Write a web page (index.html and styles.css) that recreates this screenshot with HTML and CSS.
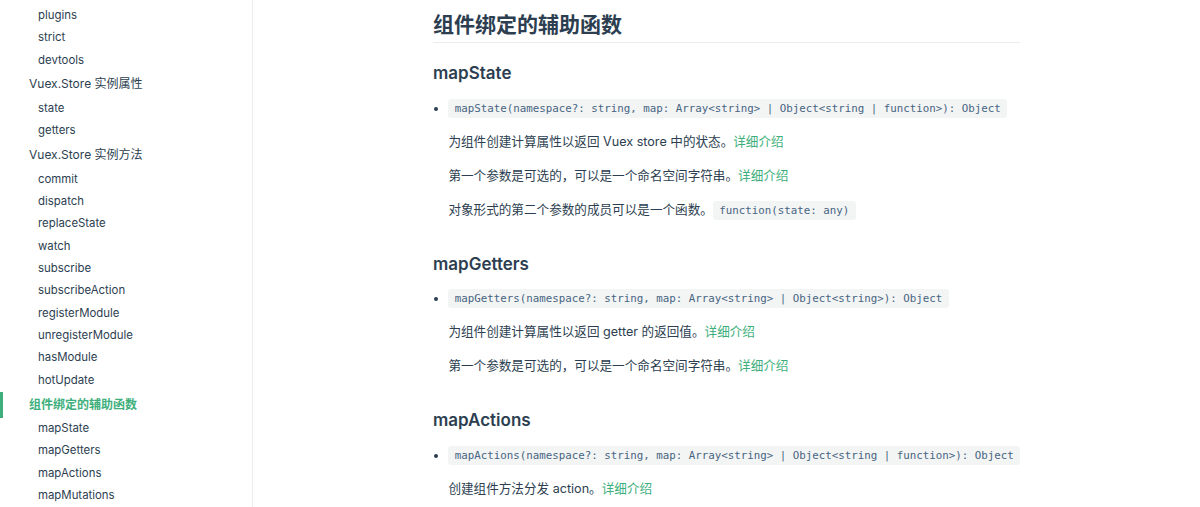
FILE: index.html
```html
<!DOCTYPE html>
<html lang="zh-CN">
<head>
    <meta charset="UTF-8">
    <meta name="viewport" content="width=device-width, initial-scale=1.0">
    <title>API 参考 | Vuex</title>
    <link rel="stylesheet" href="styles.css">
</head>
<body>
    <aside class="sidebar">
        <ul class="sidebar-links">
            <li><a class="sub-link" href="#plugins">plugins</a></li>
            <li><a class="sub-link" href="#strict">strict</a></li>
            <li><a class="sub-link" href="#devtools">devtools</a></li>
            <li><a class="group-link" href="#vuex-store-实例属性">Vuex.Store 实例属性</a></li>
            <li><a class="sub-link" href="#state">state</a></li>
            <li><a class="sub-link" href="#getters">getters</a></li>
            <li><a class="group-link" href="#vuex-store-实例方法">Vuex.Store 实例方法</a></li>
            <li><a class="sub-link" href="#commit">commit</a></li>
            <li><a class="sub-link" href="#dispatch">dispatch</a></li>
            <li><a class="sub-link" href="#replacestate">replaceState</a></li>
            <li><a class="sub-link" href="#watch">watch</a></li>
            <li><a class="sub-link" href="#subscribe">subscribe</a></li>
            <li><a class="sub-link" href="#subscribeaction">subscribeAction</a></li>
            <li><a class="sub-link" href="#registermodule">registerModule</a></li>
            <li><a class="sub-link" href="#unregistermodule">unregisterModule</a></li>
            <li><a class="sub-link" href="#hasmodule">hasModule</a></li>
            <li><a class="sub-link" href="#hotupdate">hotUpdate</a></li>
            <li><a class="group-link active" href="#组件绑定的辅助函数">组件绑定的辅助函数</a></li>
            <li><a class="sub-link" href="#mapstate">mapState</a></li>
            <li><a class="sub-link" href="#mapgetters">mapGetters</a></li>
            <li><a class="sub-link" href="#mapactions">mapActions</a></li>
            <li><a class="sub-link" href="#mapmutations">mapMutations</a></li>
        </ul>
    </aside>

    <main class="page">
        <div class="content">
            <h2 id="组件绑定的辅助函数">组件绑定的辅助函数</h2>

            <h3 id="mapstate">mapState</h3>
            <ul>
                <li>
                    <p><code>mapState(namespace?: string, map: Array&lt;string&gt; | Object&lt;string | function&gt;): Object</code></p>
                    <p>为组件创建计算属性以返回 Vuex store 中的状态。<a href="#">详细介绍</a></p>
                    <p>第一个参数是可选的，可以是一个命名空间字符串。<a href="#">详细介绍</a></p>
                    <p>对象形式的第二个参数的成员可以是一个函数。<code>function(state: any)</code></p>
                </li>
            </ul>

            <h3 id="mapgetters">mapGetters</h3>
            <ul>
                <li>
                    <p><code>mapGetters(namespace?: string, map: Array&lt;string&gt; | Object&lt;string&gt;): Object</code></p>
                    <p>为组件创建计算属性以返回 getter 的返回值。<a href="#">详细介绍</a></p>
                    <p>第一个参数是可选的，可以是一个命名空间字符串。<a href="#">详细介绍</a></p>
                </li>
            </ul>

            <h3 id="mapactions">mapActions</h3>
            <ul>
                <li>
                    <p><code>mapActions(namespace?: string, map: Array&lt;string&gt; | Object&lt;string | function&gt;): Object</code></p>
                    <p>创建组件方法分发 action。<a href="#">详细介绍</a></p>
                </li>
            </ul>
        </div>
    </main>
</body>
</html>
```

FILE: styles.css
```css
body {
    font-family: Inter, "Noto Sans CJK SC", sans-serif;
    margin: 0;
    padding: 0;
    color: #2c3e50;
    background-color: #fff;
    display: flex;
    height: 100vh;
    overflow: hidden;
}

a {
    text-decoration: none;
}

/* sidebar */
.sidebar {
    width: 252px;
    flex-shrink: 0;
    border-right: 1px solid #eaecef;
    overflow: hidden;
}

.sidebar-links {
    list-style: none;
    margin: 0;
    padding: 4.8px 0 0;
}

.sidebar-links a {
    display: block;
    color: #2c3e50;
    line-height: 1.4;
    border-left: 3px solid transparent;
}

.group-link {
    font-size: 12px;
    padding: 4.6px 10px 4.6px 26px;
}

.group-link.active {
    color: #3eaf7c;
    font-weight: 600;
    border-left-color: #3eaf7c;
}

.sub-link {
    font-size: 11.4px;
    padding: 3.2px 10px 3.2px 35px;
}

/* content */
.page {
    flex: 1;
}

.content {
    max-width: 587px;
    margin: 0 auto;
    padding-top: 12px;
}

h2 {
    font-size: 21px;
    font-weight: 600;
    line-height: 1.25;
    margin: 0;
    padding-bottom: 4px;
    border-bottom: 1px solid #eaecef;
}

h3 {
    font-size: 17px;
    font-weight: 600;
    line-height: 1.25;
    margin: 33px 0 0;
}

h2 + h3 {
    margin-top: 20px;
}

.content ul {
    margin: 0;
    padding-left: 15.4px;
}

.content li::marker {
    font-size: 11px;
}

.content p {
    font-size: 12.6px;
    line-height: 1.7;
    margin: 12.6px 0;
}

.content a {
    color: #3eaf7c;
}

code {
    font-family: "DejaVu Sans Mono", monospace;
    font-size: 10.8px;
    color: #476582;
    background-color: rgba(27, 31, 35, 0.05);
    padding: 3px 6.4px;
    border-radius: 3px;
    white-space: nowrap;
}
```
